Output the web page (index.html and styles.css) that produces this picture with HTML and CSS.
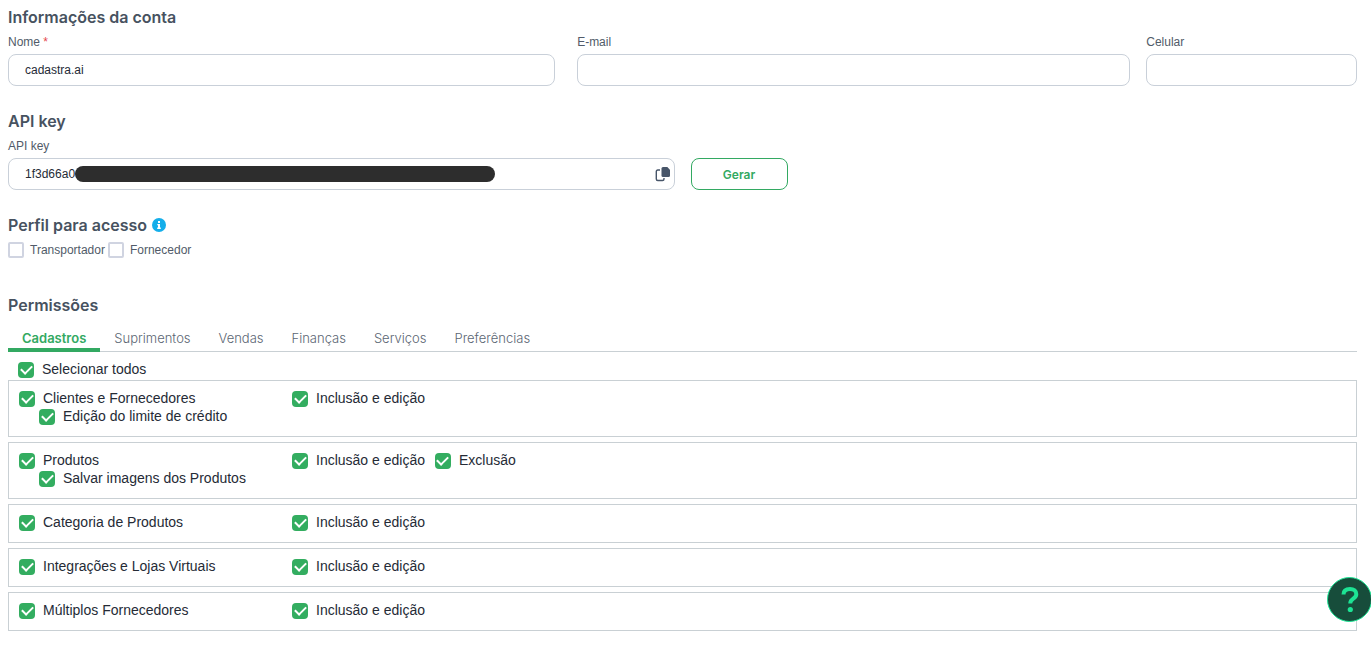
FILE: index.html
```
<!DOCTYPE html>
<html lang="pt-br">
<head>
    <meta charset="UTF-8">
    <meta name="viewport" content="width=device-width, initial-scale=1.0">
    <title>Usuário</title>
    <link rel="stylesheet" href="styles.css">
</head>
<body>
    <main>
        <section>
            <h2>Informações da conta</h2>
            <div class="account">
                <div class="field field-name">
                    <label for="nome">Nome <span class="required">*</span></label>
                    <input type="text" id="nome" value="cadastra.ai">
                </div>
                <div class="field">
                    <label for="email">E-mail</label>
                    <input type="email" id="email">
                </div>
                <div class="field">
                    <label for="celular">Celular</label>
                    <input type="tel" id="celular">
                </div>
            </div>
        </section>

        <section>
            <h2>API key</h2>
            <div class="api">
                <div class="field">
                    <label for="apikey">API key</label>
                    <div class="key-box">
                        <input type="text" id="apikey" value="1f3d66a0" readonly>
                        <span class="key-mask"></span>
                        <button type="button" class="copy" aria-label="Copiar">
                            <svg width="16" height="16" viewBox="0 0 16 16">
                                <path d="M5 4H2.8Q1.3 4 1.3 5.500V13Q1.300 14.500 2.800 14.500H7.500Q9 14.500 9 13V12" fill="none" stroke="#475569" stroke-width="1.4"/>
                                <path d="M8 1H12.300L15 3.700V9.500Q15 11 13.500 11H8Q6.500 11 6.500 9.500V2.500Q6.500 1 8 1Z" fill="#475569"/>
                            </svg>
                        </button>
                    </div>
                </div>
                <button type="button" class="generate">Gerar</button>
            </div>
        </section>

        <section class="profile">
            <h2>Perfil para acesso
                <svg class="info" width="14" height="14" viewBox="0 0 14 14">
                    <circle cx="7" cy="7" r="7" fill="#14aeea"/>
                    <path d="M6 3h2v2H6zM5.300 6H8v3.500h.8V11H5.200V9.500H6V7.300h-.7z" fill="#fff"/>
                </svg>
            </h2>
            <div class="profile-options">
                <label><input type="checkbox"> Transportador</label>
                <label><input type="checkbox"> Fornecedor</label>
            </div>
        </section>

        <section>
            <h2>Permissões</h2>
            <nav class="tabs">
                <a href="#" class="active">Cadastros</a>
                <a href="#">Suprimentos</a>
                <a href="#">Vendas</a>
                <a href="#">Finanças</a>
                <a href="#">Serviços</a>
                <a href="#">Preferências</a>
            </nav>

            <label class="check select-all"><input type="checkbox" checked> Selecionar todos</label>

            <div class="permissions">
                <div class="permission">
                    <div class="module">
                        <label class="check"><input type="checkbox" checked> Clientes e Fornecedores</label>
                        <label class="check sub"><input type="checkbox" checked> Edição do limite de crédito</label>
                    </div>
                    <label class="check"><input type="checkbox" checked> Inclusão e edição</label>
                </div>
                <div class="permission">
                    <div class="module">
                        <label class="check"><input type="checkbox" checked> Produtos</label>
                        <label class="check sub"><input type="checkbox" checked> Salvar imagens dos Produtos</label>
                    </div>
                    <label class="check"><input type="checkbox" checked> Inclusão e edição</label>
                    <label class="check"><input type="checkbox" checked> Exclusão</label>
                </div>
                <div class="permission">
                    <div class="module">
                        <label class="check"><input type="checkbox" checked> Categoria de Produtos</label>
                    </div>
                    <label class="check"><input type="checkbox" checked> Inclusão e edição</label>
                </div>
                <div class="permission">
                    <div class="module">
                        <label class="check"><input type="checkbox" checked> Integrações e Lojas Virtuais</label>
                    </div>
                    <label class="check"><input type="checkbox" checked> Inclusão e edição</label>
                </div>
                <div class="permission">
                    <div class="module">
                        <label class="check"><input type="checkbox" checked> Múltiplos Fornecedores</label>
                    </div>
                    <label class="check"><input type="checkbox" checked> Inclusão e edição</label>
                </div>
            </div>
        </section>
    </main>

    <button type="button" class="help" aria-label="Ajuda">
        <svg width="20" height="28" viewBox="0 0 20 28">
            <path d="M3.500 8.500C3.500 4.800 6.200 3 10 3c3.800 0 6.300 2 6.300 5.200 0 4.600-6 4.300-6 8.800v.6" fill="none" stroke="#1de394" stroke-width="4"/>
            <circle cx="10.300" cy="23.500" r="2.600" fill="#1de394"/>
        </svg>
    </button>
</body>
</html>
```
FILE: styles.css
```
* {
    box-sizing: border-box;
}

body {
    margin: 0;
    background-color: #fff;
    color: #252b36;
    font-family: "Liberation Sans", Arial, sans-serif;
    font-size: 12px;
}

main {
    padding: 5px 14px 0 8px;
}

section {
    margin-bottom: 23px;
}

h2 {
    display: flex;
    align-items: center;
    gap: 5px;
    margin: 0 0 4px;
    color: #475260;
    font-family: Inter, sans-serif;
    font-size: 16px;
    font-weight: 600;
    line-height: 24px;
}

.account {
    display: grid;
    grid-template-columns: 42fr 42fr 16fr;
    gap: 16px;
}

.field {
    display: flex;
    flex-direction: column;
    gap: 3px;
}

.field-name {
    margin-right: 6px;
}

.field label {
    color: #515b69;
    line-height: 18px;
}

.required {
    color: #e5484d;
}

.field input {
    width: 100%;
    height: 32px;
    padding: 0 16px;
    border: 1px solid #c9d0d9;
    border-radius: 8px;
    background-color: #fff;
    color: #252b36;
    font-family: inherit;
    font-size: 12px;
}

.api {
    display: grid;
    grid-template-columns: 1fr 1fr;
    align-items: end;
    gap: 16px;
}

.key-box {
    position: relative;
}

.key-mask {
    position: absolute;
    top: 8px;
    left: 67px;
    width: 420px;
    height: 16px;
    border-radius: 8px;
    background-color: #2d2d2d;
}

.copy {
    position: absolute;
    top: 8px;
    right: 4px;
    height: 16px;
    padding: 0;
    border: none;
    background: none;
}

.copy svg {
    display: block;
}

.generate {
    width: 97px;
    height: 32px;
    border: 1px solid #33a962;
    border-radius: 8px;
    background-color: #fff;
    color: #33a962;
    font-family: Inter, sans-serif;
    font-size: 12px;
    font-weight: 600;
}

.profile {
    margin-bottom: 34px;
}

.profile-options {
    display: flex;
    gap: 3px;
}

.profile-options label {
    display: flex;
    align-items: center;
    gap: 6px;
    color: #515b69;
    line-height: 18px;
}

input[type="checkbox"] {
    display: grid;
    place-content: center;
    appearance: none;
    width: 16px;
    height: 16px;
    margin: 0;
    border: 2px solid #d0d4e1;
    border-radius: 2px;
}

input[type="checkbox"]:checked {
    border: none;
    border-radius: 4px;
    background-color: #33ad60;
}

input[type="checkbox"]:checked::before {
    content: "";
    width: 9px;
    height: 5px;
    margin-bottom: 3px;
    border-left: 2px solid #fff;
    border-bottom: 2px solid #fff;
    transform: rotate(-45deg);
}

.tabs {
    display: flex;
    height: 31px;
    border-bottom: 1px solid #c9d0d4;
}

.tabs a {
    height: 31px;
    padding: 0 14px;
    color: #5b6673;
    font-family: Inter, sans-serif;
    font-size: 13px;
    font-weight: 300;
    line-height: 34px;
    text-decoration: none;
}

.tabs .active {
    border-bottom: 4px solid #33a962;
    color: #33a962;
    font-weight: 600;
}

/* the box sits 1px lower than its text */
.check {
    display: flex;
    align-items: flex-end;
    gap: 8px;
    font-size: 14px;
    line-height: 18px;
}

.select-all {
    padding: 8px 10px 2px;
}

.permissions {
    display: flex;
    flex-direction: column;
    gap: 5px;
}

.permission {
    display: flex;
    align-items: flex-start;
    gap: 10px;
    padding: 8px 10px 11px;
    border: 1px solid #c9d0d4;
}

.module {
    width: 263px;
}

.sub {
    margin-left: 20px;
}

.help {
    display: flex;
    align-items: center;
    justify-content: center;
    position: fixed;
    right: -1px;
    bottom: 31px;
    width: 45px;
    height: 45px;
    padding: 0;
    border: 1px solid #1de394;
    border-radius: 50%;
    background-color: #174d3b;
}
```
